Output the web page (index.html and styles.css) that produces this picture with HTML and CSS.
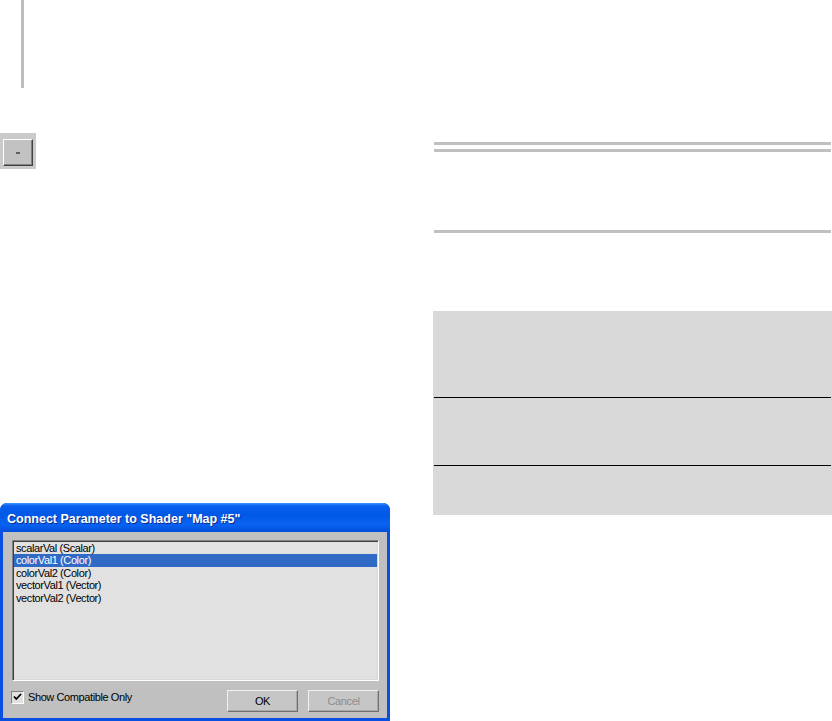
FILE: index.html
```html
<!DOCTYPE html>
<html lang="en">

<head>
    <meta charset="UTF-8">
    <meta name="viewport" content="width=device-width, initial-scale=1.0">
    <title>Connect Parameter to Shader</title>
    <link rel="stylesheet" href="styles.css">
</head>

<body>
    <div class="margin-bar"></div>

    <div class="content">
        <div class="left-col">
            <div class="mini-frame">
                <div class="mini-btn"><span class="dash"></span></div>
            </div>

            <div class="dialog">
                <div class="title-bar">Connect Parameter to Shader "Map #5"</div>
                <div class="dialog-body">
                    <ul class="param-list">
                        <li>scalarVal (Scalar)</li>
                        <li class="selected">colorVal1 (Color)</li>
                        <li>colorVal2 (Color)</li>
                        <li>vectorVal1 (Vector)</li>
                        <li>vectorVal2 (Vector)</li>
                    </ul>
                    <div class="dialog-footer">
                        <label class="check">
                            <span class="check-box">
                                <svg width="11" height="11" viewBox="0 0 11 11">
                                    <path d="M2 4.5 L4.3 7 L9 2" fill="none" stroke="#000" stroke-width="1.8" />
                                </svg>
                            </span>
                            Show Compatible Only
                        </label>
                        <div class="buttons">
                            <div class="btn">OK</div>
                            <div class="btn disabled">Cancel</div>
                        </div>
                    </div>
                </div>
            </div>
        </div>

        <div class="right-col">
            <div class="rule"></div>
            <div class="rule rule-second"></div>
            <div class="rule rule-low"></div>

            <div class="table-box">
                <div class="table-row row-one"></div>
                <div class="table-row row-two"></div>
                <div class="table-row row-three"></div>
            </div>
        </div>
    </div>
</body>

</html>
```

FILE: styles.css
```css
html,
body {
    margin: 0;
    height: 721px;
    overflow: hidden;
    background: #fff;
    font-family: 'Liberation Sans', Arial, sans-serif;
}

.margin-bar {
    width: 3px;
    height: 88px;
    margin-left: 21px;
    background: #bdbdbd;
}

.content {
    display: grid;
    grid-template-columns: 433px 399px;
}

/* left column */

.left-col {
    padding-top: 45px;
}

.mini-frame {
    width: 30px;
    height: 27px;
    padding: 6px 3px 3px 3px;
    background: #cacaca;
}

.mini-btn {
    box-sizing: border-box;
    width: 30px;
    height: 27px;
    background: #c2c2c2;
    border: 1px solid;
    border-color: #fff #404040 #404040 #fff;
    box-shadow: inset -1px -1px #808080;
    display: flex;
    align-items: center;
    justify-content: center;
}

.dash {
    width: 4px;
    height: 2px;
    background: #606060;
}

.dialog {
    box-sizing: border-box;
    width: 390px;
    height: 218px;
    margin-top: 334px;
    border: 3px solid #0a50e0;
    border-top: 0;
    border-radius: 7px 7px 0 0;
    background: #0a50e0;
    display: flex;
    flex-direction: column;
}

.title-bar {
    box-sizing: border-box;
    height: 29px;
    margin: 0 -3px;
    padding: 9px 0 0 7px;
    border-radius: 7px 7px 0 0;
    background: linear-gradient(#3d95ff 0, #0a60ee 3px, #0058e6 40%, #0a62f2 75%, #004ed8 100%);
    color: #fff;
    font-weight: bold;
    font-size: 12.5px;
    line-height: 15px;
    text-shadow: 1px 1px 0 #0d2a8a;
}

.dialog-body {
    flex: 1;
    background: #c0c0c0;
    padding: 8px 8px 0 9px;
    font-size: 11px;
    letter-spacing: -0.4px;
}

.param-list {
    box-sizing: border-box;
    height: 141px;
    margin: 0;
    padding: 0.5px 0 0 0;
    list-style: none;
    background: #e1e1e1;
    border: 1px solid;
    border-color: #808080 #fff #fff #808080;
    box-shadow: inset 1px 1px #404040, inset -1px -1px #d8d8d8;
}

.param-list li {
    height: 12.5px;
    line-height: 12.5px;
    margin: 0 1px;
    padding-left: 2px;
    color: #000;
}

.param-list li.selected {
    background: #316ac5;
    color: #fff;
}

.dialog-footer {
    display: flex;
    align-items: flex-start;
}

.check {
    display: flex;
    align-items: center;
    gap: 4px;
    margin: 10px 0 0 -1px;
    line-height: 13px;
    color: #000;
}

.check-box {
    box-sizing: border-box;
    width: 13px;
    height: 13px;
    background: #e1e1e1;
    border: 1px solid;
    border-color: #808080 #fff #fff #808080;
    display: flex;
}

.buttons {
    display: flex;
    gap: 10px;
    margin: 9px 0 0 auto;
}

.btn {
    box-sizing: border-box;
    width: 71px;
    height: 22px;
    line-height: 20px;
    text-align: center;
    background: #c6c6c6;
    border: 1px solid;
    border-color: #f0f0f0 #707070 #707070 #f0f0f0;
    box-shadow: inset -1px -1px #a8a8a8;
    color: #000;
}

.btn.disabled {
    color: #8c8c8c;
}

/* right column */

.right-col {
    padding-top: 54px;
}

.rule {
    height: 3px;
    margin: 0 1px;
    background: #c0c0c0;
}

.rule-second {
    margin-top: 4px;
}

.rule-low {
    margin-top: 78px;
}

.table-box {
    margin-top: 78px;
    background: #d9d9d9;
}

.table-row {
    margin: 0 1px;
}

.row-one {
    height: 86px;
}

.row-two {
    height: 67px;
    border-top: 1px solid #000;
}

.row-three {
    height: 49px;
    border-top: 1px solid #000;
}
```
